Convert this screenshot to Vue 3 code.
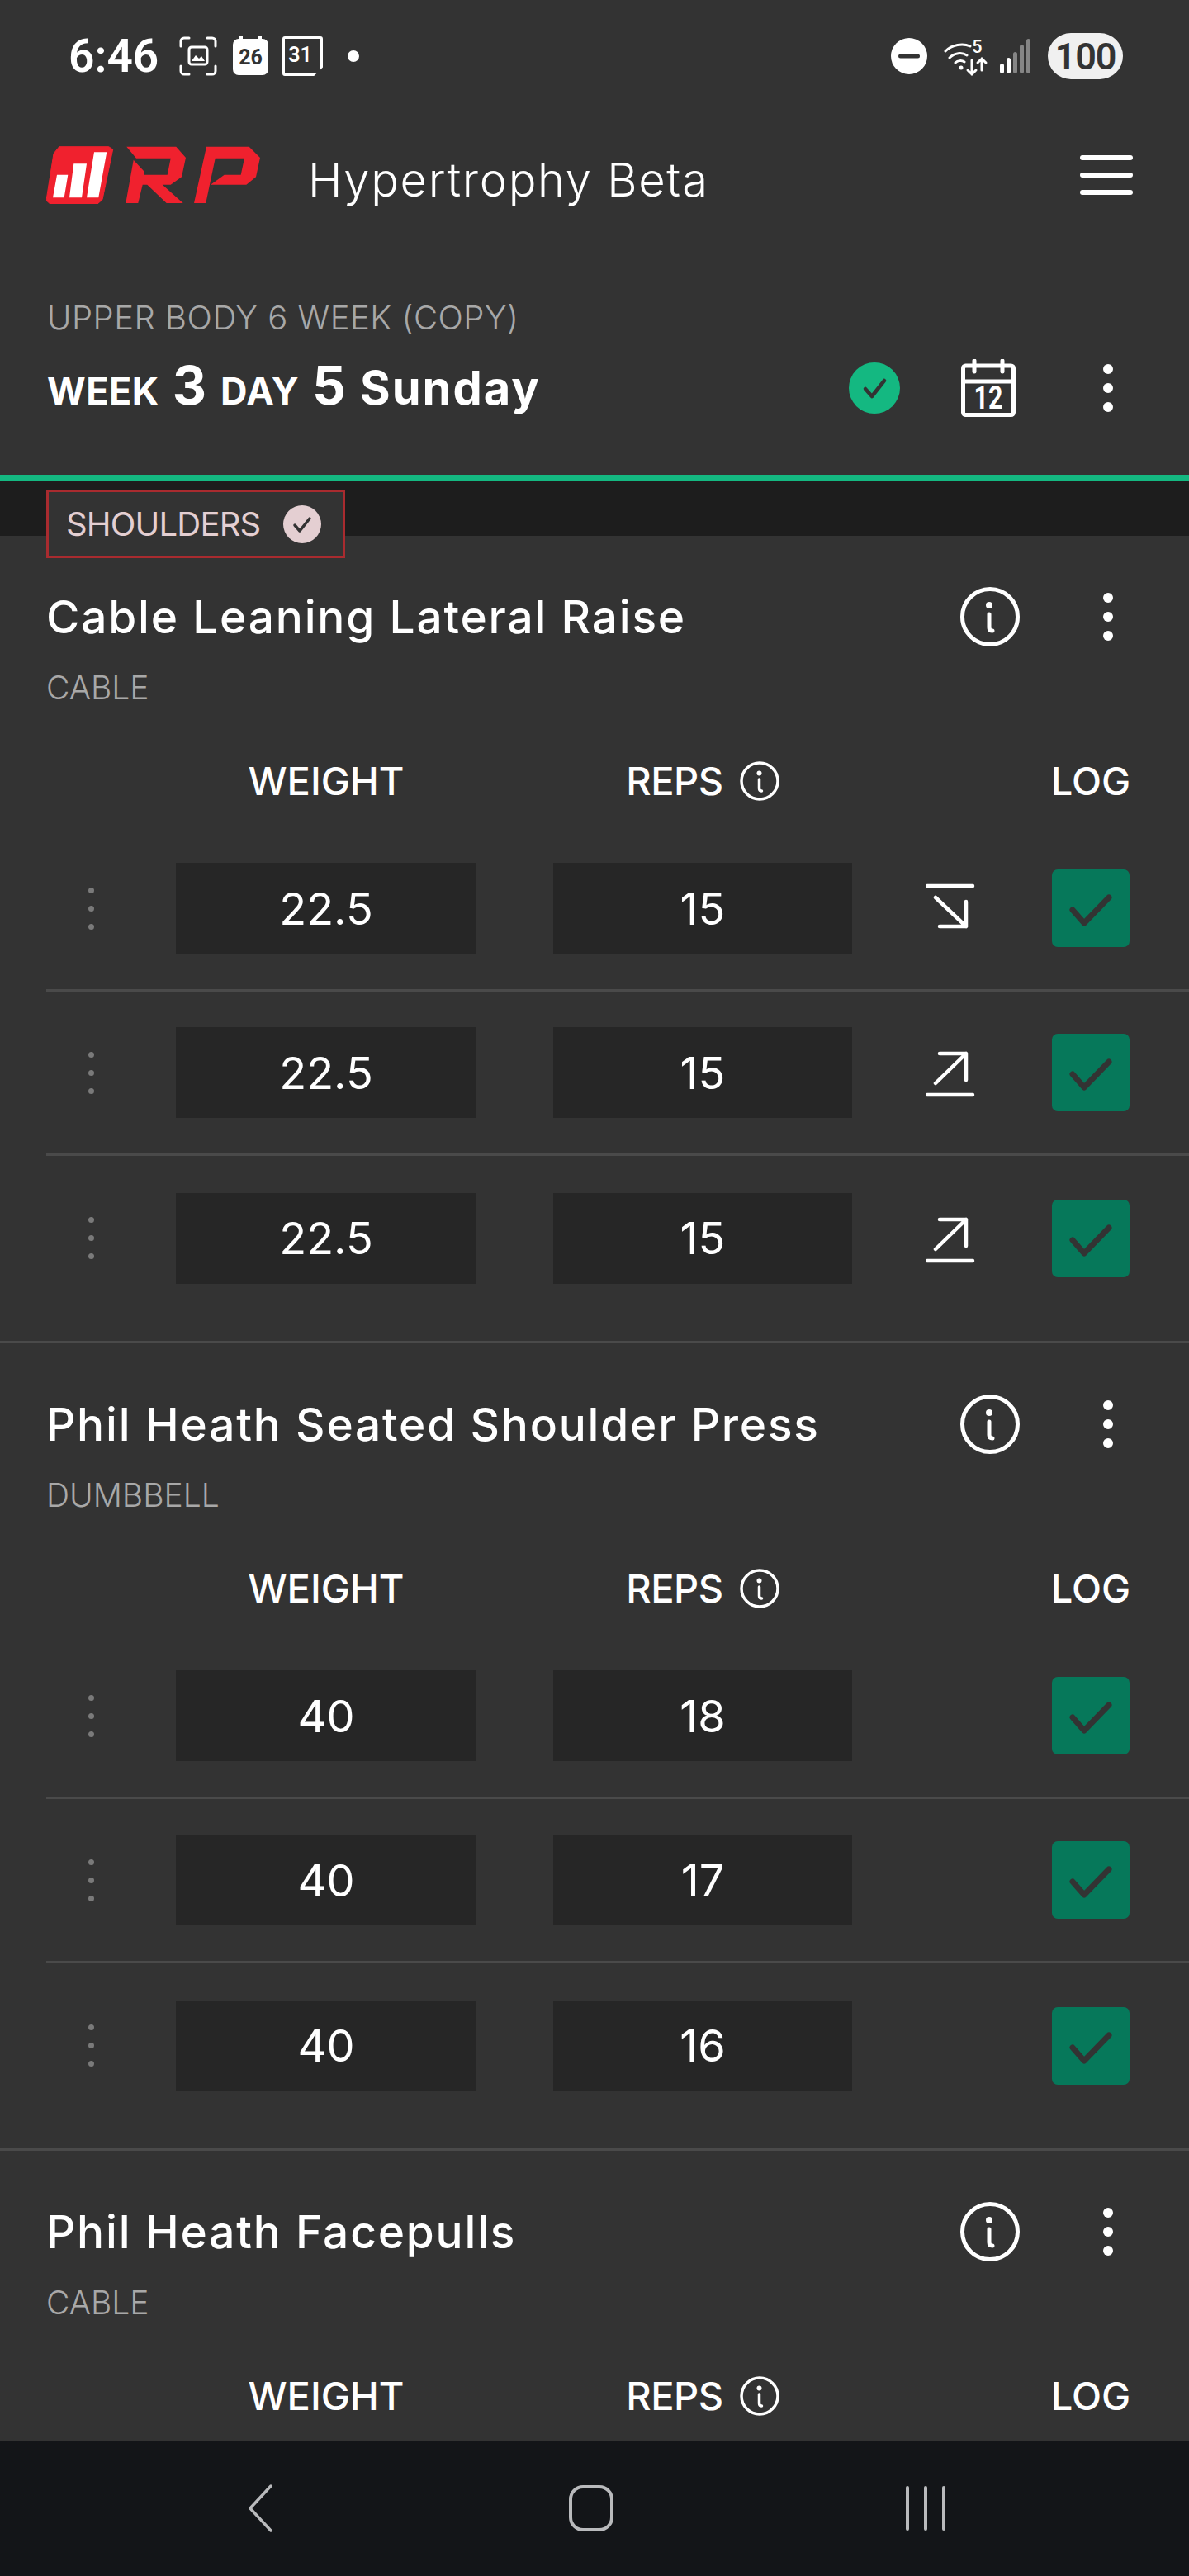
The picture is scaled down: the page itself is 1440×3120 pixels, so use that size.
<template>
  <div class="screen">
    <div class="status-bar">
      <span class="clock">6:46</span>
      <svg class="st-icon shot" viewBox="0 0 46 48" fill="none" stroke="#fff" stroke-width="3" stroke-linecap="round">
        <path d="M2 12V6a4 4 0 0 1 4-4h6M34 2h6a4 4 0 0 1 4 4v6M44 36v6a4 4 0 0 1-4 4h-6M12 46H6a4 4 0 0 1-4-4v-6" />
        <rect x="12" y="13" width="22" height="21" rx="3" />
        <path d="M15 30l5-7 4 4 3-3 4 6z" fill="#fff" stroke="none" />
      </svg>
      <span class="cal-badge"><span>26</span></span>
      <span class="sim-badge"><span>31</span></span>
      <span class="st-dot"></span>
      <span class="st-spacer"></span>
      <svg class="st-icon dnd" viewBox="0 0 44 44">
        <circle cx="22" cy="22" r="22" fill="#fff" />
        <rect x="9" y="19.5" width="26" height="5" rx="2.5" fill="#333" />
      </svg>
      <svg class="st-icon wifi" viewBox="0 0 54 44" fill="none" stroke="#fff" stroke-width="3" stroke-linecap="round">
        <path d="M2 13C10 5 23 3 32 7M7 21c6-6 15-7 21-3M14 27c3-3 8-3 11-1" />
        <circle cx="21" cy="33" r="2.5" fill="#fff" stroke="none" />
        <path d="M34 24v17M29 36l5 5 5-5M46 36V22M41 27l5-5 5 5" />
      </svg>
      <span class="wifi-five">5</span>
      <svg class="st-icon signal" viewBox="0 0 38 42">
        <rect x="0" y="30" width="5" height="12" rx="2.5" fill="#fff" />
        <rect x="8" y="23" width="5" height="19" rx="2.5" fill="#fff" />
        <rect x="16" y="16" width="5" height="26" rx="2.5" fill="#858585" />
        <rect x="24" y="7" width="5" height="35" rx="2.5" fill="#858585" />
        <rect x="32" y="0" width="5" height="42" rx="2.5" fill="#858585" />
      </svg>
      <span class="battery">100</span>
    </div>

    <div class="app-bar">
      <svg class="logo" viewBox="0 0 260 70">
        <path d="M15.7 .7H75.7L80.7 4L68 64.7L62 70H4.7L0 65.7L9 9Z" fill="#f0212e" stroke="#f0212e" stroke-linejoin="round" />
        <path d="M13 34.7H26.3L21.7 62.3H8ZM33.3 21.3H49L43 62.3H28ZM58 7.3H73.3L63.3 62.3H49Z" fill="#fff" />
        <path d="M97.3 .7H157.3L169 14L164 37.3L150.7 46.7H140.7L165.7 69H145.7L122.3 46.7H116.7L111.3 69H96.3L105.7 16.7L118 30V34.7H146.7L150.7 14.7H109Z" fill="#f0212e" />
        <path d="M194 .7H245.7L259 14L254 37.3L242.3 46.7H199L215.7 34.7H235.7L240 14.7H204.7L193.3 69H179Z" fill="#f0212e" />
      </svg>
      <span class="app-title">Hypertrophy Beta</span>
      <div class="burger"><i></i><i></i><i></i></div>
    </div>

    <div class="hero">
      <div class="program">UPPER BODY 6 WEEK (COPY)</div>
      <div class="hero-row">
        <div class="week-line">
          <span class="small-cap">WEEK</span>
          <span class="big-num">3</span>
          <span class="small-cap">DAY</span>
          <span class="big-num">5</span>
          <span class="weekday">Sunday</span>
        </div>
        <svg class="done-icon" viewBox="0 0 62 62">
          <circle cx="31" cy="31" r="31" fill="#14b881" />
          <path d="M20 32l8 9 15-19" fill="none" stroke="#333" stroke-width="4.5" stroke-linecap="round" stroke-linejoin="round" />
        </svg>
        <div class="cal-btn">
          <svg viewBox="0 0 66 70" fill="none" stroke="#fff" stroke-width="5" stroke-linecap="round">
            <rect x="2.5" y="8" width="61" height="59.5" rx="3" />
            <path d="M3 27h60M16 2v13M50 2v13" />
          </svg>
          <span>12</span>
        </div>
        <div class="kebab"><i></i><i></i><i></i></div>
      </div>
    </div>

    <div class="muscle-bar">
      <div class="muscle-tag">
        <span>SHOULDERS</span>
        <svg viewBox="0 0 46 46">
          <circle cx="23" cy="23" r="23" fill="#e4cfd2" />
          <path d="M14 24l6 7 12-15" fill="none" stroke="#333" stroke-width="3.5" stroke-linecap="round" stroke-linejoin="round" />
        </svg>
      </div>
    </div>

    <div class="scroller">
      <section v-for="ex in exercises" :key="ex.name" class="exercise">
        <div class="ex-head">
          <h2>{{ ex.name }}</h2>
          <svg class="info-big" viewBox="0 0 72 72" fill="none" stroke="#fff" stroke-linecap="round">
            <circle cx="36" cy="36" r="33.5" stroke-width="5" />
            <circle cx="35" cy="22" r="4" fill="#fff" stroke="none" />
            <path d="M35 33v16q0 4 4 4" stroke-width="5" />
          </svg>
          <div class="kebab"><i></i><i></i><i></i></div>
        </div>
        <div class="equipment">{{ ex.kind }}</div>
        <div class="set-grid set-labels">
          <span></span>
          <span class="label">WEIGHT</span>
          <span class="label reps-label">
            REPS
            <svg viewBox="0 0 48 48" fill="none" stroke="#fff" stroke-linecap="round">
              <circle cx="24" cy="24" r="22" stroke-width="3.5" />
              <circle cx="23.5" cy="14.5" r="3" fill="#fff" stroke="none" />
              <path d="M23.5 22v11q0 3 3 3" stroke-width="3.5" />
            </svg>
          </span>
          <span></span>
          <span class="label">LOG</span>
        </div>
        <div v-for="(set, i) in ex.sets" :key="i" class="set-grid set-row">
          <div class="drag"><i></i><i></i><i></i></div>
          <div class="field">{{ set.weight }}</div>
          <div class="field">{{ set.reps }}</div>
          <div class="trend">
            <svg v-if="set.trend === 'down'" viewBox="0 0 60 60" fill="none" stroke="#fff" stroke-width="4.5" stroke-linecap="round" stroke-linejoin="round">
              <path d="M2 3h55M12 17l37 35M17 52h32V22" />
            </svg>
            <svg v-else-if="set.trend === 'up'" viewBox="0 0 60 60" fill="none" stroke="#fff" stroke-width="4.5" stroke-linecap="round" stroke-linejoin="round">
              <path d="M2 57h55M12 43l37-36M17 7h32v32" />
            </svg>
          </div>
          <div class="log-box">
            <svg viewBox="0 0 94 94" fill="none" stroke="#333" stroke-width="7" stroke-linecap="round" stroke-linejoin="round">
              <path d="M25 49l14 16 30-31" />
            </svg>
          </div>
        </div>
      </section>
    </div>

    <div class="nav-bar">
      <svg class="nav-back" viewBox="0 0 30 58" fill="none" stroke="#b9babc" stroke-width="3.5" stroke-linecap="round" stroke-linejoin="round">
        <path d="M28 2L3 29l25 27" />
      </svg>
      <svg class="nav-home" viewBox="0 0 54 56" fill="none" stroke="#b9babc" stroke-width="4">
        <rect x="2" y="2" width="50" height="52" rx="15" />
      </svg>
      <div class="nav-recent"><i></i><i></i><i></i></div>
    </div>
  </div>
</template>

<script setup>
const exercises = [
  {
    name: 'Cable Leaning Lateral Raise',
    kind: 'CABLE',
    sets: [
      { weight: '22.5', reps: 15, trend: 'down' },
      { weight: '22.5', reps: 15, trend: 'up' },
      { weight: '22.5', reps: 15, trend: 'up' }
    ]
  },
  {
    name: 'Phil Heath Seated Shoulder Press',
    kind: 'DUMBBELL',
    sets: [
      { weight: 40, reps: 18 },
      { weight: 40, reps: 17 },
      { weight: 40, reps: 16 }
    ]
  },
  {
    name: 'Phil Heath Facepulls',
    kind: 'CABLE',
    sets: []
  }
]
</script>

<style>
html,
body {
  margin: 0;
  background: #333;
}
</style>

<style scoped>
.screen {
  width: 1440px;
  height: 3120px;
  display: flex;
  flex-direction: column;
  overflow: hidden;
  background: #333;
  color: #fff;
  font-family: Inter, "Open Sans", sans-serif;
}

i {
  display: block;
}

/* status bar */
.status-bar {
  height: 136px;
  flex: none;
  display: flex;
  align-items: center;
  padding: 0 80px 0 83px;
  box-sizing: border-box;
  font-family: Roboto, sans-serif;
}
.clock {
  font-size: 55px;
  font-weight: 600;
  width: 134px;
}
.st-icon {
  flex: none;
  display: block;
}
.shot {
  width: 46px;
  height: 48px;
  margin-right: 19px;
}
.cal-badge {
  width: 43px;
  height: 44px;
  margin-top: 2px;
  margin-right: 17px;
  border-radius: 7px;
  background: #fff;
  color: #333;
  font-size: 25px;
  font-weight: 700;
  display: flex;
  align-items: center;
  justify-content: center;
  position: relative;
}
.cal-badge::before {
  content: '';
  position: absolute;
  top: -3px;
  left: 8px;
  right: 8px;
  height: 6px;
  border-left: 4px solid #fff;
  border-right: 4px solid #fff;
}
.sim-badge {
  width: 49px;
  height: 48px;
  box-sizing: border-box;
  border: 3px solid #fff;
  border-radius: 3px;
  clip-path: polygon(0 0, 100% 0, 100% 78%, 78% 100%, 0 100%);
  font-size: 25px;
  font-weight: 600;
  display: flex;
  align-items: center;
  justify-content: center;
  padding-right: 6px;
  padding-bottom: 4px;
}
.st-dot {
  width: 14px;
  height: 14px;
  border-radius: 50%;
  background: #fff;
  margin-left: 30px;
}
.st-spacer {
  flex: 1;
}
.dnd {
  width: 44px;
  height: 44px;
  margin-right: 20px;
}
.wifi {
  width: 54px;
  height: 44px;
  margin-top: 6px;
}
.wifi-five {
  font-size: 22px;
  font-weight: 500;
  width: 0;
  margin-left: -20px;
  margin-right: 34px;
  margin-top: -24px;
}
.signal {
  width: 38px;
  height: 42px;
  margin-right: 20px;
}
.battery {
  width: 91px;
  height: 56px;
  border-radius: 28px;
  background: #f0f0f0;
  color: #333;
  font-size: 45px;
  font-weight: 600;
  letter-spacing: -1px;
  display: flex;
  align-items: center;
  justify-content: center;
}

/* app bar */
.app-bar {
  height: 152px;
  flex: none;
  display: flex;
  align-items: center;
  padding: 0 68px 0 56px;
  box-sizing: border-box;
}
.logo {
  width: 260px;
  height: 70px;
  flex: none;
  margin-right: 57px;
}
.app-title {
  font-size: 56px;
  font-weight: 300;
  letter-spacing: 1.7px;
  flex: 1;
  margin-top: 12px;
}
.burger {
  width: 64px;
  display: flex;
  flex-direction: column;
  gap: 15px;
}
.burger i {
  height: 6px;
  border-radius: 3px;
  background: #fff;
}

/* program header */
.hero {
  height: 294px;
  flex: none;
  box-sizing: border-box;
  border-bottom: 7px solid #14b881;
  padding: 69px 92px 0 57px;
}
.program {
  font-size: 40px;
  font-weight: 300;
  letter-spacing: .5px;
  color: #a8a8a8;
  line-height: 56px;
}
.hero-row {
  display: flex;
  align-items: center;
  height: 72px;
  margin-top: 21px;
}
.week-line {
  flex: 1;
  display: flex;
  align-items: baseline;
  line-height: 72px;
  font-weight: 700;
}
.small-cap {
  font-size: 45px;
  letter-spacing: .5px;
  margin-right: 16px;
}
.big-num {
  font-size: 64px;
  font-weight: 700;
  letter-spacing: -3px;
  margin-right: 20px;
}
.weekday {
  font-size: 56px;
  font-weight: 700;
  letter-spacing: 2px;
}
.done-icon {
  width: 62px;
  height: 62px;
  flex: none;
  margin-right: 74px;
}
.cal-btn {
  width: 66px;
  height: 70px;
  position: relative;
  flex: none;
  margin-right: 106px;
}
.cal-btn svg {
  display: block;
  width: 66px;
  height: 70px;
}
.cal-btn span {
  position: absolute;
  left: 0;
  right: 0;
  top: 28px;
  text-align: center;
  font-family: Roboto, sans-serif;
  font-size: 38px;
  line-height: 38px;
  font-weight: 700;
  transform: scaleX(.8);
}
.kebab {
  width: 12px;
  flex: none;
  display: flex;
  flex-direction: column;
  gap: 11px;
}
.kebab i {
  height: 12px;
  border-radius: 50%;
  background: #fff;
}

/* muscle group bar */
.muscle-bar {
  height: 67px;
  flex: none;
  background: #1d1d1d;
  padding: 11px 0 0 56px;
  box-sizing: border-box;
  position: relative;
  z-index: 1;
}
.muscle-tag {
  width: 362px;
  height: 83px;
  box-sizing: border-box;
  border: 3px solid #a92b2f;
  background: #333;
  display: flex;
  align-items: center;
  padding-left: 21px;
  color: #e4cfd2;
  font-size: 40px;
  letter-spacing: -.8px;
}
.muscle-tag span {
  width: 263px;
}
.muscle-tag svg {
  width: 46px;
  height: 46px;
  flex: none;
}

/* exercises */
.scroller {
  flex: 1;
  min-height: 0;
  overflow: hidden;
}
.exercise {
  padding: 63px 0 25px 56px;
  border-bottom: 3px solid #4a4a4a;
}
.ex-head {
  height: 70px;
  display: flex;
  align-items: center;
  padding-right: 92px;
}
.ex-head h2 {
  flex: 1;
  margin: 0;
  font-size: 55px;
  font-weight: 500;
  letter-spacing: 1.8px;
}
.info-big {
  width: 72px;
  height: 72px;
  flex: none;
  margin-right: 101px;
}
.equipment {
  margin-top: 31px;
  font-size: 39px;
  line-height: 40px;
  font-weight: 300;
  color: #a8a8a8;
}
.set-grid {
  display: grid;
  grid-template-columns: 64px 364px 362px 56px 94px;
  column-gap: 93px;
  align-items: center;
}
.set-labels {
  margin-top: 64px;
  height: 56px;
  margin-bottom: 29px;
}
.label {
  font-size: 47px;
  font-weight: 500;
  text-align: center;
  white-space: nowrap;
  display: flex;
  justify-content: center;
  align-items: center;
}
.reps-label {
  letter-spacing: -.5px;
}
.reps-label svg {
  width: 48px;
  height: 48px;
  margin-left: 20px;
  flex: none;
}
.set-row {
  height: 199px;
  box-sizing: border-box;
  border-bottom: 3px solid #4a4a4a;
}
.set-row:last-child {
  border-bottom: 0;
}
.drag {
  justify-self: end;
  margin-right: 6px;
  display: flex;
  flex-direction: column;
  gap: 15px;
}
.drag i {
  width: 7px;
  height: 7px;
  border-radius: 50%;
  background: #7a7a7a;
}
.field {
  height: 110px;
  background: #262626;
  display: flex;
  align-items: center;
  justify-content: center;
  font-size: 54px;
  font-weight: 400;
}
.trend svg {
  display: block;
  width: 60px;
  height: 60px;
  margin-left: -4px;
}
.log-box {
  width: 94px;
  height: 94px;
  border-radius: 7px;
  background: #06785a;
}
.log-box svg {
  display: block;
}

/* android nav */
.nav-bar {
  height: 164px;
  flex: none;
  background: #131518;
  display: flex;
  align-items: center;
  padding: 0 0 0 300px;
}
.nav-back {
  width: 30px;
  height: 58px;
  flex: none;
  margin-right: 359px;
}
.nav-home {
  width: 54px;
  height: 56px;
  flex: none;
  margin-right: 354px;
}
.nav-recent {
  display: flex;
  gap: 18px;
}
.nav-recent i {
  width: 4px;
  height: 54px;
  border-radius: 2px;
  background: #b9babc;
}
</style>
